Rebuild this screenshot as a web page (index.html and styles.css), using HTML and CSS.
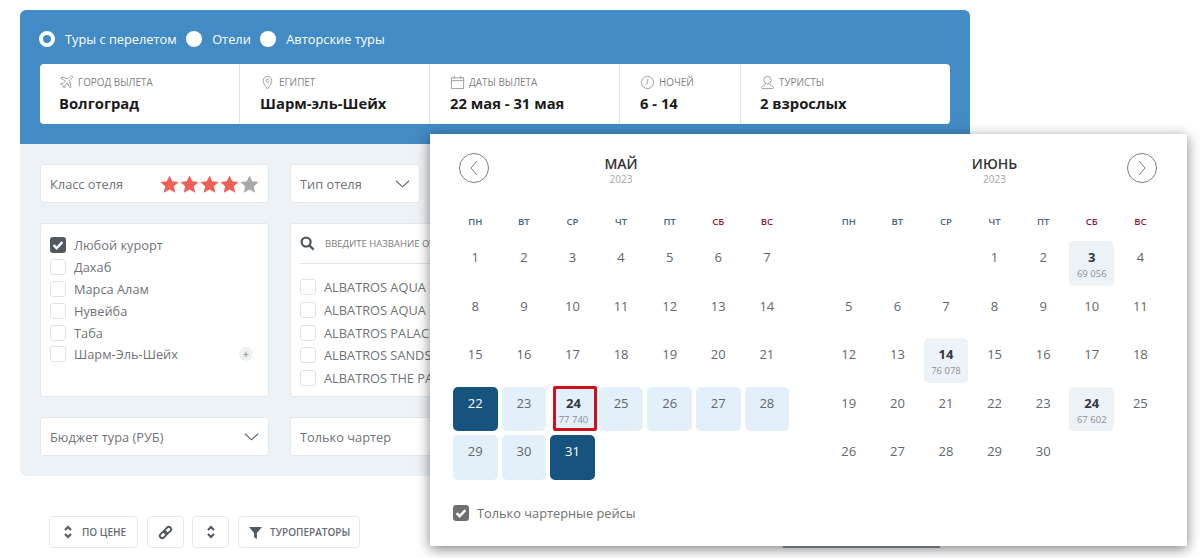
FILE: index.html
```html
<!DOCTYPE html>
<html lang="ru">
<head>
    <meta charset="UTF-8">
    <title>Поиск туров</title>
    <link rel="stylesheet" href="styles.css">
</head>
<body>
    <svg class="defs" width="0" height="0">
        <symbol id="check" viewBox="0 0 16 16"><path d="M3.6 8.2l3 3 5.8-6" fill="none" stroke="#fff" stroke-width="2.4"/></symbol>
        <symbol id="chevron" viewBox="0 0 16 10"><path d="M1 1.5l7 6.5 7-6.5" fill="none" stroke="#5d6670" stroke-width="1.2"/></symbol>
        <symbol id="sort" viewBox="0 0 10 16"><path d="M2 6l3-3 3 3M2 10l3 3 3-3" fill="none" stroke="#555c64" stroke-width="2.2"/></symbol>
        <symbol id="star" viewBox="0 0 20 19"><polygon points="10,0.500 12.900,6.700 19.600,7.400 14.600,12 16,18.700 10,15.300 4,18.700 5.400,12 0.400,7.400 7.100,6.700"/></symbol>
    </svg>

    <div class="search">
        <div class="search-head">
            <div class="tabs">
                <span class="radio radio-on"></span><span class="tab">Туры с перелетом</span>
                <span class="radio"></span><span class="tab">Отели</span>
                <span class="radio"></span><span class="tab">Авторские туры</span>
            </div>
            <div class="fields">
                <div class="field field-city">
                    <div class="field-label">
                        <svg class="field-icon" viewBox="0 0 16 16"><path d="M14.500 1.500c-1-.8-2.300-.3-3.200.6L9.400 4 3 2.200 1.800 3.400 7 6.400 4.500 9l-2-.4-1 1 2.500 1.500L5.500 14l1-1-.4-2 2.600-2.500 3 5.200 1.200-1.200L11.100 6l1.900-1.900c.9-.9 2.200-1.800 1.500-2.600z"/></svg>
                        Город вылета
                    </div>
                    <div class="field-value">Волгоград</div>
                </div>
                <div class="field field-place">
                    <div class="field-label">
                        <svg class="field-icon" viewBox="0 0 16 16"><path d="M8 15C5.500 11.500 3.500 8.800 3.500 6a4.500 4.500 0 0 1 9 0c0 2.800-2 5.500-4.500 9z"/><circle cx="8" cy="6" r="1.700"/></svg>
                        Египет
                    </div>
                    <div class="field-value">Шарм-эль-Шейх</div>
                </div>
                <div class="field field-dates">
                    <div class="field-label">
                        <svg class="field-icon" viewBox="0 0 16 16"><path d="M1.500 3h13v11.500h-13zM1.500 6h13M4.500 1v3M11.500 1v3"/></svg>
                        Даты вылета
                    </div>
                    <div class="field-value">22 мая - 31 мая</div>
                </div>
                <div class="field field-nights">
                    <div class="field-label">
                        <svg class="field-icon" viewBox="0 0 16 16"><circle cx="8" cy="8" r="6.500"/><path d="M8.500 3.500L8 8.500 5.500 11"/></svg>
                        Ночей
                    </div>
                    <div class="field-value">6 - 14</div>
                </div>
                <div class="field">
                    <div class="field-label">
                        <svg class="field-icon" viewBox="0 0 16 16"><circle cx="8" cy="5.500" r="4"/><path d="M6 9.500c0 1.500-4.500 2-4.500 3.800 0 .8.500 1.200 1.500 1.200h10c1 0 1.500-.4 1.500-1.200 0-1.800-4.500-2.300-4.500-3.800"/></svg>
                        Туристы
                    </div>
                    <div class="field-value">2 взрослых</div>
                </div>
            </div>
        </div>

        <div class="filters">
            <div class="box box-select">
                <span>Класс отеля</span>
                <span class="stars">
                    <svg class="star star-on"><use href="#star"/></svg>
                    <svg class="star star-on"><use href="#star"/></svg>
                    <svg class="star star-on"><use href="#star"/></svg>
                    <svg class="star star-on"><use href="#star"/></svg>
                    <svg class="star"><use href="#star"/></svg>
                </span>
            </div>
            <div class="box box-select box-short">
                <span>Тип отеля</span>
                <svg class="chevron"><use href="#chevron"/></svg>
            </div>

            <div class="box box-list">
                <div class="list-row"><span class="cb cb-on"><svg><use href="#check"/></svg></span>Любой курорт</div>
                <div class="list-row"><span class="cb"></span>Дахаб</div>
                <div class="list-row"><span class="cb"></span>Марса Алам</div>
                <div class="list-row"><span class="cb"></span>Нувейба</div>
                <div class="list-row"><span class="cb"></span>Таба</div>
                <div class="list-row"><span class="cb"></span>Шарм-Эль-Шейх<span class="plus">+</span></div>
            </div>
            <div class="box box-hotels">
                <div class="hotel-search">
                    <svg class="search-icon" viewBox="0 0 16 16"><circle cx="6.500" cy="6.500" r="4.800"/><path d="M10 10l4.500 4.500"/></svg>
                    Введите название отеля
                </div>
                <div class="hotel-row"><span class="cb"></span>ALBATROS AQUA BLU</div>
                <div class="hotel-row"><span class="cb"></span>ALBATROS AQUA PARK</div>
                <div class="hotel-row"><span class="cb"></span>ALBATROS PALACE</div>
                <div class="hotel-row"><span class="cb"></span>ALBATROS SANDS</div>
                <div class="hotel-row"><span class="cb"></span>ALBATROS THE PALACE</div>
            </div>

            <div class="box box-select">
                <span>Бюджет тура (РУБ)</span>
                <svg class="chevron"><use href="#chevron"/></svg>
            </div>
            <div class="box box-select">
                <span>Только чартер</span>
                <svg class="chevron"><use href="#chevron"/></svg>
            </div>
        </div>
    </div>

    <div class="toolbar">
        <div class="tool tool-price"><svg class="tool-sort"><use href="#sort"/></svg>По цене</div>
        <div class="tool tool-square">
            <svg class="tool-link" viewBox="0 0 16 16"><g transform="rotate(-45 8 8)"><rect x="0.500" y="5.500" width="8.500" height="5" rx="2.500"/><rect x="7" y="5.500" width="8.500" height="5" rx="2.500"/></g></svg>
        </div>
        <div class="tool tool-square"><svg class="tool-sort"><use href="#sort"/></svg></div>
        <div class="tool tool-operators">
            <svg class="tool-filter" viewBox="0 0 14 14"><path d="M0 1h14L8.500 7.500V14l-3-1.800V7.500z"/></svg>
            Туроператоры
        </div>
        <div class="tool-more"></div>
    </div>

    <div class="calendar">
        <button class="cal-nav cal-prev"><svg viewBox="0 0 10 16"><path d="M8 1L2 8l6 7"/></svg></button>
        <button class="cal-nav cal-next"><svg viewBox="0 0 10 16"><path d="M2 1l6 7-6 7"/></svg></button>
        <div class="months">
            <div class="month">
                <div class="month-name">Май</div>
                <div class="month-year">2023</div>
                <div class="weekdays">
                    <span>пн</span><span>вт</span><span>ср</span><span>чт</span><span>пт</span><span class="weekend">сб</span><span class="weekend">вс</span>
                </div>
                <div class="days">
                    <div class="day">1</div><div class="day">2</div><div class="day">3</div><div class="day">4</div><div class="day">5</div><div class="day">6</div><div class="day">7</div>
                    <div class="day">8</div><div class="day">9</div><div class="day">10</div><div class="day">11</div><div class="day">12</div><div class="day">13</div><div class="day">14</div>
                    <div class="day">15</div><div class="day">16</div><div class="day">17</div><div class="day">18</div><div class="day">19</div><div class="day">20</div><div class="day">21</div>
                    <div class="day day-edge">22</div><div class="day day-range">23</div>
                    <div class="day day-range day-marked"><b>24</b><small>77 740</small></div>
                    <div class="day day-range">25</div><div class="day day-range">26</div><div class="day day-range">27</div><div class="day day-range">28</div>
                    <div class="day day-range">29</div><div class="day day-range">30</div><div class="day day-edge">31</div>
                </div>
            </div>
            <div class="month">
                <div class="month-name">Июнь</div>
                <div class="month-year">2023</div>
                <div class="weekdays">
                    <span>пн</span><span>вт</span><span>ср</span><span>чт</span><span>пт</span><span class="weekend">сб</span><span class="weekend">вс</span>
                </div>
                <div class="days">
                    <div class="day day-blank"></div><div class="day day-blank"></div><div class="day day-blank"></div>
                    <div class="day">1</div><div class="day">2</div><div class="day day-price"><b>3</b><small>69 056</small></div><div class="day">4</div>
                    <div class="day">5</div><div class="day">6</div><div class="day">7</div><div class="day">8</div><div class="day">9</div><div class="day">10</div><div class="day">11</div>
                    <div class="day">12</div><div class="day">13</div><div class="day day-price"><b>14</b><small>76 078</small></div><div class="day">15</div><div class="day">16</div><div class="day">17</div><div class="day">18</div>
                    <div class="day">19</div><div class="day">20</div><div class="day">21</div><div class="day">22</div><div class="day">23</div><div class="day day-price"><b>24</b><small>67 602</small></div><div class="day">25</div>
                    <div class="day">26</div><div class="day">27</div><div class="day">28</div><div class="day">29</div><div class="day">30</div>
                </div>
            </div>
        </div>
        <div class="charter"><span class="cb cb-on cb-grey"><svg><use href="#check"/></svg></span>Только чартерные рейсы</div>
    </div>
</body>
</html>
```

FILE: styles.css
```css
html, body {
    height: 558px;
    overflow: hidden;
}
body {
    position: relative;
    margin: 0;
    background-color: #fff;
    font-family: "Open Sans", "Noto Sans", sans-serif;
    font-size: 12.800px;
    color: #6f7377;
}
.defs {
    position: absolute;
}

/* search panel */
.search {
    width: 950px;
    margin: 10px 0 0 20px;
    border-radius: 6px;
    overflow: hidden;
}
.search-head {
    height: 134px;
    box-sizing: border-box;
    padding: 20px 20px 0 19px;
    background-color: #428bc5;
}
.tabs {
    display: flex;
    align-items: center;
    height: 18px;
    color: #fff;
}
.radio {
    width: 16px;
    height: 16px;
    margin-right: 10px;
    border-radius: 50%;
    background-color: #fff;
}
.radio-on {
    box-sizing: border-box;
    border: 4px solid #fff;
    background-color: #428bc5;
}
.tab {
    margin-right: 9.500px;
}
.fields {
    display: flex;
    height: 60px;
    margin: 16px 0 0 1px;
    width: 910px;
    border-radius: 4px;
    background-color: #fff;
}
.field {
    box-sizing: border-box;
    padding: 9px 0 0 19px;
    border-right: 1px solid #dfe3e6;
}
.field:last-child {
    flex: 1;
    border-right: 0;
}
.field-city { width: 200px; padding-left: 19px; }
.field-place { width: 190px; padding-left: 20px; }
.field-dates { width: 190px; padding-left: 20px; }
.field-nights { width: 121px; padding-left: 20px; }
.field-label {
    display: flex;
    align-items: center;
    gap: 4px;
    height: 18px;
    font-size: 9.900px;
    text-transform: uppercase;
    color: #7f7f7f;
}
.field-icon {
    width: 15px;
    height: 15px;
    fill: none;
    stroke: #9b9b9b;
    stroke-width: 1;
}
.field-value {
    margin-top: 1px;
    font-size: 14.800px;
    line-height: 22px;
    font-weight: 700;
    color: #1b1b1b;
}

/* filters */
.filters {
    display: grid;
    grid-template-columns: 229px 229px;
    grid-template-rows: 39px 174px 39px;
    gap: 20px 21px;
    height: 332px;
    box-sizing: border-box;
    padding: 20px;
    background-color: #edf2f6;
}
.box {
    box-sizing: border-box;
    border: 1px solid #e3e8ec;
    border-radius: 3px;
    background-color: #fff;
}
.box-select {
    display: flex;
    align-items: center;
    justify-content: space-between;
    padding: 0 9px 0 9px;
}
.box-short {
    width: 130px;
}
.chevron {
    width: 15px;
    height: 10px;
}
.stars {
    display: flex;
    gap: 1px;
}
.star {
    width: 19px;
    height: 18px;
    fill: #a9a9a9;
}
.star-on {
    fill: #ef6158;
}
.box-list {
    padding: 10px 9px 0;
}
.list-row {
    position: relative;
    display: flex;
    align-items: center;
    height: 21.900px;
}
.cb {
    flex: none;
    display: block;
    box-sizing: border-box;
    width: 16px;
    height: 16px;
    margin-right: 8px;
    border: 1px solid #e0e3e6;
    border-radius: 3px;
    background-color: #fff;
}
.cb svg {
    display: block;
    width: 16px;
    height: 16px;
}
.cb-on {
    border: 0;
    background-color: #51585f;
}
.cb-grey {
    background-color: #707070;
}
.plus {
    position: absolute;
    right: 6px;
    top: 4px;
    width: 14px;
    height: 14px;
    border-radius: 50%;
    background-color: #eef0f2;
    font-size: 11px;
    line-height: 13px;
    text-align: center;
    color: #777;
}
.box-hotels {
    padding: 0 9px;
    white-space: nowrap;
    overflow: hidden;
}
.hotel-search {
    display: flex;
    align-items: center;
    gap: 10px;
    height: 39px;
    margin-bottom: 12px;
    border-bottom: 1px solid #e3e6e9;
    font-size: 9.500px;
    text-transform: uppercase;
    color: #7b7b7b;
}
.search-icon {
    width: 15px;
    height: 15px;
    fill: none;
    stroke: #51585f;
    stroke-width: 2.400;
}
.hotel-row {
    display: flex;
    align-items: center;
    height: 22.700px;
}

/* toolbar under the panel */
.toolbar {
    display: flex;
    align-items: flex-start;
    gap: 9px;
    margin: 40px 0 0 49px;
}
.tool {
    display: flex;
    align-items: center;
    box-sizing: border-box;
    height: 32px;
    border: 1px solid #e6e8eb;
    border-radius: 4px;
    font-size: 10px;
    font-weight: 600;
    text-transform: uppercase;
    color: #666c73;
}
.tool-price {
    width: 89px;
    padding-left: 13px;
}
.tool-square {
    justify-content: center;
    width: 37px;
}
.tool-square + .tool-square {
    margin-left: -1px;
}
.tool-operators {
    width: 122px;
    padding-left: 10px;
}
.tool-sort {
    width: 10px;
    height: 16px;
    margin-right: 9px;
}
.tool-square .tool-sort {
    margin: 0;
}
.tool-link {
    width: 15px;
    height: 15px;
    fill: none;
    stroke: #51585f;
    stroke-width: 2;
}
.tool-filter {
    width: 13px;
    height: 13px;
    margin-right: 8px;
    fill: #51585f;
}
.tool-more {
    width: 157px;
    height: 2px;
    margin: 30px 0 0 414px;
    background-color: #98a2ac;
}

/* calendar popup */
.calendar {
    position: absolute;
    left: 430px;
    top: 134px;
    width: 757px;
    height: 412px;
    box-sizing: border-box;
    padding: 21px 0 0 23px;
    background-color: #fff;
    box-shadow: 0 3px 12px rgba(0, 0, 0, .5);
}
.cal-nav {
    position: absolute;
    top: 19px;
    width: 30px;
    height: 30px;
    padding: 0;
    border: 1px solid #7d7d7d;
    border-radius: 50%;
    background-color: #fff;
}
.cal-nav svg {
    display: block;
    width: 10px;
    height: 16px;
    margin: 0 auto;
    fill: none;
    stroke: #7d7d7d;
}
.cal-prev { left: 29px; }
.cal-next { right: 30px; }
.months {
    display: flex;
    gap: 37.500px;
}
.month {
    width: 336px;
}
.month-name {
    font-size: 14px;
    line-height: 18px;
    font-weight: 600;
    text-align: center;
    text-transform: uppercase;
    color: #333;
}
.month-year {
    font-size: 10px;
    line-height: 12px;
    text-align: center;
    color: #a5a5a5;
}
.weekdays {
    display: grid;
    grid-template-columns: repeat(7, 44.600px);
    column-gap: 4px;
    height: 18px;
    margin: 28px 0 10px;
    font-size: 9.500px;
    font-weight: 600;
    line-height: 18px;
    text-align: center;
    text-transform: uppercase;
    color: #47667a;
}
.weekend {
    color: #8c1d3f;
}
.days {
    display: grid;
    grid-template-columns: repeat(7, 44.600px);
    grid-auto-rows: 44.600px;
    gap: 4px;
}
.day {
    box-sizing: border-box;
    padding-top: 7px;
    border-radius: 5px;
    font-size: 13px;
    line-height: 18px;
    text-align: center;
    color: #63666a;
}
.day b {
    display: block;
    font-weight: 700;
    color: #33383d;
}
.day small {
    display: block;
    font-size: 9.500px;
    line-height: 14px;
    margin-top: 1px;
    color: #8a8e92;
}
.day-blank {
    visibility: hidden;
}
.day-price {
    background-color: #edf2f6;
}
.day-range {
    background-color: #e3f0fa;
}
.day-edge {
    background-color: #17537f;
    color: #fff;
}
.day-marked {
    margin: -1px -2px 0 3px;
    padding: 5px 3px 0 0;
    border: 3px solid #d0111b;
    border-radius: 2px;
}
.charter {
    display: flex;
    align-items: center;
    margin-top: 24px;
    color: #707070;
}
```
